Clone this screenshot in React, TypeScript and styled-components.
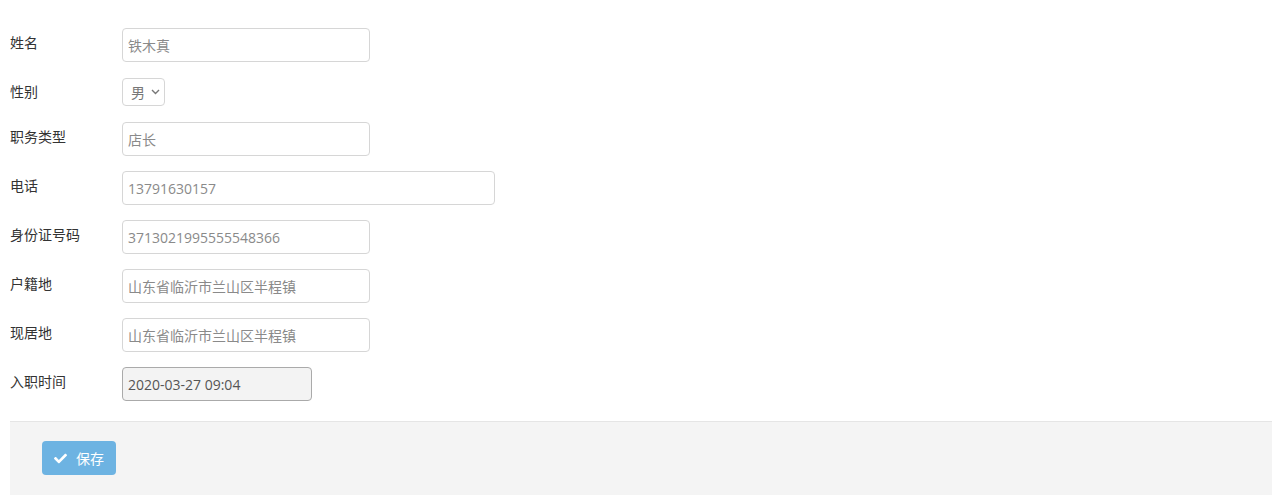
import React from 'react';
import styled, { createGlobalStyle } from 'styled-components';
import { FaCheck } from 'react-icons/fa';

const GlobalStyle = createGlobalStyle`
  html, body {
    margin: 0;
    padding: 0;
    background: #fff;
  }
  body {
    font-family: 'Open Sans', 'Noto Sans CJK SC', sans-serif;
    font-size: 14px;
    color: #333;
  }
`;

// Styles
const Page = styled.div`
  padding: 28px 0 8px 10px;
`;

const Form = styled.form`
  display: flex;
  flex-direction: column;
`;

const Row = styled.div<{ $gap?: number }>`
  display: flex;
  align-items: flex-start;
  margin-bottom: ${(p) => (p.$gap ?? 15)}px;
`;

const Label = styled.label<{ $top?: number }>`
  width: 112px;
  flex: none;
  padding-top: ${(p) => p.$top ?? 5}px;
  font-size: 14px;
  line-height: 20px;
  color: #333;
`;

const Input = styled.input<{ $width?: number }>`
  box-sizing: border-box;
  width: ${(p) => p.$width ?? 248}px;
  height: 34px;
  padding: 6px 5px;
  border: 1px solid #d6d6d6;
  border-radius: 4px;
  font-family: inherit;
  font-size: 14px;
  color: #8a8a8a;
  background: #fff;
  outline: none;
  &:read-only {
    background: #f3f3f3;
    border-color: #aaa;
    color: #555;
  }
`;

const SelectBox = styled.div`
  box-sizing: border-box;
  display: flex;
  align-items: center;
  gap: 6px;
  width: 43px;
  height: 28px;
  padding: 0 0 0 8px;
  border: 1px solid #d6d6d6;
  border-radius: 4px;
  font-size: 14px;
  color: #777;
  svg {
    flex: none;
  }
`;

const Footer = styled.div`
  margin-top: 5px;
  padding: 19px 32px 20px;
  background: #f4f4f4;
  border-top: 1px solid #e5e5e5;
`;

const Button = styled.button`
  display: inline-flex;
  align-items: center;
  gap: 9px;
  height: 34px;
  padding: 0 12px 0 12px;
  border: none;
  border-radius: 4px;
  background: #6db3e2;
  color: #fff;
  font-family: inherit;
  font-size: 14px;
  cursor: pointer;
`;

const fields = [
  { label: '姓名', value: '铁木真' },
  { label: '职务类型', value: '店长' },
  { label: '电话', value: '13791630157', width: 373 },
  { label: '身份证号码', value: '3713021995555548366' },
  { label: '户籍地', value: '山东省临沂市兰山区半程镇' },
  { label: '现居地', value: '山东省临沂市兰山区半程镇' },
];

const Chevron = () => (
  <svg width="9" height="6" viewBox="0 0 9 6">
    <path d="M1 1l3.5 3.5L8 1" fill="none" stroke="#777" strokeWidth="1.4" />
  </svg>
);

const App: React.FC = () => {
  const [first, ...rest] = fields;
  return (
    <Page>
      <GlobalStyle />
      <Form>
        <Row $gap={16}>
          <Label>{first.label}</Label>
          <Input defaultValue={first.value} />
        </Row>
        <Row $gap={16}>
          <Label $top={4}>性别</Label>
          <SelectBox>
            男 <Chevron />
          </SelectBox>
        </Row>
        {rest.map((f) => (
          <Row key={f.label}>
            <Label>{f.label}</Label>
            <Input defaultValue={f.value} $width={f.width} />
          </Row>
        ))}
        <Row>
          <Label>入职时间</Label>
          <Input defaultValue="2020-03-27 09:04" $width={190} readOnly />
        </Row>
      </Form>
      <Footer>
        <Button type="button">
          <FaCheck size={13} />
          保存
        </Button>
      </Footer>
    </Page>
  );
};

export default App;
